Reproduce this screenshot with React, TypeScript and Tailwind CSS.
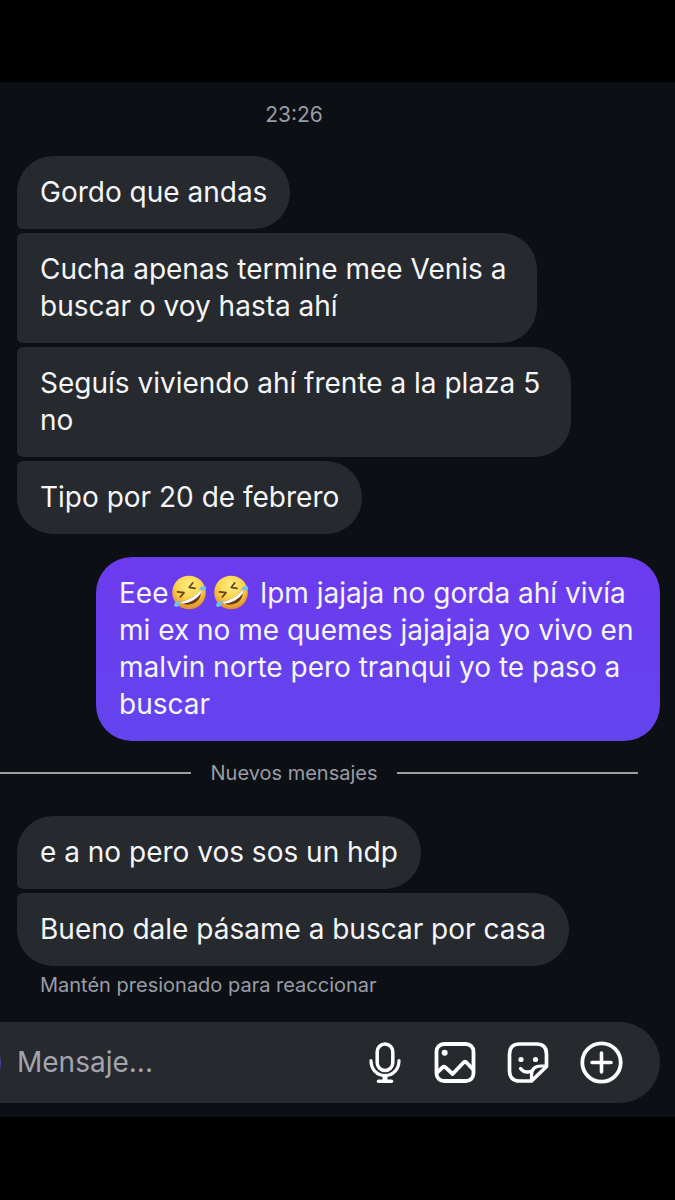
import React from 'react';
import { clsx } from 'clsx';

interface IMessage {
  id: number;
  text: string;
}

interface IBubbleProps {
  message: IMessage;
  isFirst: boolean;
  isLast: boolean;
}

const firstGroup: IMessage[] = [
  { id: 1, text: 'Gordo que andas' },
  { id: 2, text: 'Cucha apenas termine mee Venis a \nbuscar o voy hasta ahí' },
  { id: 3, text: 'Seguís viviendo ahí frente a la plaza 5 \nno' },
  { id: 4, text: 'Tipo por 20 de febrero' }
];

const newGroup: IMessage[] = [
  { id: 6, text: 'e a no pero vos sos un hdp' },
  { id: 7, text: 'Bueno dale pásame a buscar por casa' }
];

const RoflEmoji: React.FC = () => (
  <svg
    viewBox="0 0 36 36"
    aria-hidden="true"
    className="mx-[3px] inline-block h-9 w-9 align-[-8px]"
  >
    <defs>
      <radialGradient id="face" cx="0.5" cy="0.3" r="0.7">
        <stop offset="0" stopColor="#fff08a" />
        <stop offset="0.55" stopColor="#fbd24a" />
        <stop offset="1" stopColor="#e08a2a" />
      </radialGradient>
    </defs>
    <circle cx="18" cy="17.500" r="16.8" fill="url(#face)" />
    <path d="M6.500 16.800l6.500.9-3.600 4.200" fill="none" stroke="#6b3d10" strokeWidth="1.700" strokeLinecap="round" strokeLinejoin="round" />
    <path d="M21.800 7.800l-3.600 4.600 5.800.9" fill="none" stroke="#6b3d10" strokeWidth="1.700" strokeLinecap="round" strokeLinejoin="round" />
    <path d="M9 27C16.500 26 24.500 21 29.500 15c1.500 5.500-1.500 11-6.500 13.300-5 2.300-10.500 1.700-14-1.300z" fill="#6a3a12" />
    <path d="M9 27C16.500 26 24.500 21 29.500 15c.5 1.500.5 2.600.2 3.800C25 24.500 18.500 28.200 11.500 28.700z" fill="#fff" />
    <path d="M28 14.300c1.800-3.200 4.800-3.400 7.200-2.400.8 2.700-2.800 5-7.200 2.400z" fill="#6cc4ee" />
    <path d="M9.200 25.500c.6 4-1.500 6.500-4.200 6.300-2.900-.3-3.300-4.300 4.200-6.300z" fill="#6cc4ee" />
  </svg>
);

const MicIcon: React.FC = () => (
  <svg viewBox="0 0 36 42" className="h-[42px] w-9" fill="none" stroke="currentColor" strokeLinecap="round" aria-hidden="true">
    <rect x="10.200" y="2" width="15.600" height="26.500" rx="7.800" strokeWidth="3.500" />
    <path d="M4 18.500c0 9 6 15 14 15s14-6 14-15" strokeWidth="3.200" />
    <path d="M18 34v5" strokeWidth="5" strokeLinecap="butt" />
    <path d="M11.500 39.200h13" strokeWidth="3.500" />
  </svg>
);

const ImageIcon: React.FC = () => (
  <svg viewBox="0 0 42 42" className="h-[42px] w-[42px]" fill="none" stroke="currentColor" strokeWidth="3.800" strokeLinejoin="round" aria-hidden="true">
    <rect x="2.500" y="2" width="37" height="37" rx="7.500" />
    <circle cx="10.700" cy="10.700" r="3" fill="currentColor" stroke="none" />
    <path d="M3 30.500l5.500-5q1.700-1.500 3.300.2l6.800 6.300 10.700-11.300q1.700-1.700 3.400 0l6.500 6.800" />
  </svg>
);

const StickerIcon: React.FC = () => (
  <svg viewBox="0 0 42 42" className="h-[42px] w-[42px]" fill="none" stroke="currentColor" strokeWidth="3.700" strokeLinecap="round" strokeLinejoin="round" aria-hidden="true">
    <path d="M24.500 39H12.500C6 39 2.500 35.500 2.500 29V12C2.500 5.500 6 2 12.500 2h17C36 2 39.500 5.500 39.500 12v12.500z" />
    <path d="M24.500 38.500v-5c0-6.500 3.500-9.500 9.500-9.500h5" strokeWidth="3.200" />
    <path d="M13.500 26.500c2.500 3.200 6.500 4.200 10.500 2.800" strokeWidth="3.400" />
    <circle cx="14" cy="17.500" r="2.600" fill="currentColor" stroke="none" />
    <circle cx="28.500" cy="17.500" r="2.600" fill="currentColor" stroke="none" />
  </svg>
);

const PlusIcon: React.FC = () => (
  <svg viewBox="0 0 42 42" className="h-[42px] w-[42px] overflow-visible" fill="none" stroke="currentColor" strokeLinecap="round" aria-hidden="true">
    <circle cx="21.500" cy="20.500" r="19.200" strokeWidth="3.800" />
    <path d="M21.500 11v19M12 20.500h19" strokeWidth="3.600" />
  </svg>
);

const Bubble: React.FC<IBubbleProps> = ({ message, isFirst, isLast }) => (
  <li
    className={clsx(
      'w-fit max-w-full whitespace-break-spaces rounded-r-[36px] bg-[#26292d] px-[23px] py-[18px]',
      isFirst ? 'rounded-tl-[36px]' : 'rounded-tl-md',
      isLast ? 'rounded-bl-[36px]' : 'rounded-bl-md'
    )}
  >
    {message.text}
  </li>
);

const MessageGroup: React.FC<{ messages: IMessage[] }> = ({ messages }) => (
  <ul className="ml-[104px] flex flex-col gap-1">
    {messages.map((message, index) => (
      <Bubble
        key={message.id}
        message={message}
        isFirst={index === 0}
        isLast={index === messages.length - 1}
      />
    ))}
  </ul>
);

export default function App() {
  return (
    <div className="min-h-screen overflow-hidden bg-black py-[82px] font-['Inter','Liberation_Sans',sans-serif] text-[28px] leading-[37px] text-[#f5f6f9]">
      {/* The chat is panned left, so its avatar column is out of view */}
      <main className="-ml-[87px] bg-[#0c1014] pb-[14px]">
        <time className="block pt-[19px] pb-[27px] text-center text-[21px] leading-7 text-[#999ca6]">
          23:26
        </time>

        <MessageGroup messages={firstGroup} />

        <div className="mt-[23px] mr-[15px] flex justify-end">
          <p className="max-w-[564px] rounded-[36px] bg-linear-to-b from-[#6c3bee] to-[#6344ee] px-[23px] py-[18px]">
            Eee
            <RoflEmoji />
            <RoflEmoji /> lpm jajaja no gorda ahí vivía mi ex no me quemes jajajaja yo vivo en
            malvin norte pero tranqui yo te paso a buscar
          </p>
        </div>

        {/* New messages divider */}
        <div className="mx-[37px] mt-[18px] mb-[29px] flex items-center gap-[19px] text-xl leading-7 text-[#999ca6]">
          <span className="h-0.5 flex-1 bg-[#9a9fa2]" />
          <span>Nuevos mensajes</span>
          <span className="h-0.5 flex-1 bg-[#9a9fa2]" />
        </div>

        <MessageGroup messages={newGroup} />
        <p className="mt-[5px] mb-[23px] ml-[127px] text-xl leading-7 text-[#999ca6]">
          Mantén presionado para reaccionar
        </p>

        {/* Composer */}
        <form
          className="mr-[15px] ml-4 flex h-[81px] items-center rounded-full bg-[#26292d] pr-[38px] pl-2"
          onSubmit={(event) => event.preventDefault()}
        >
          <button type="button" aria-label="Cámara" className="h-16 w-16 shrink-0 rounded-full bg-[#4a3f94]" />
          <input
            type="text"
            aria-label="Mensaje"
            placeholder="Mensaje..."
            className="ml-4 min-w-0 flex-1 bg-transparent outline-none placeholder:text-[#a2a5af]"
          />
          <div className="flex shrink-0 items-center gap-[31px] text-white">
            <button type="button" aria-label="Grabar audio"><MicIcon /></button>
            <button type="button" aria-label="Galería"><ImageIcon /></button>
            <button type="button" aria-label="Stickers"><StickerIcon /></button>
            <button type="button" aria-label="Más opciones"><PlusIcon /></button>
          </div>
        </form>
      </main>
    </div>
  );
}
